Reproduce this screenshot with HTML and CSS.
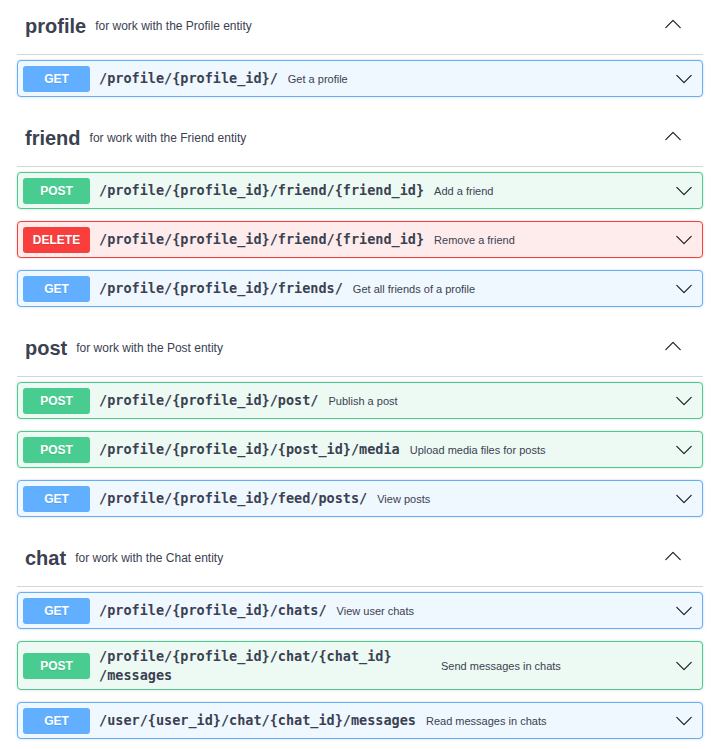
FILE: index.html
```html
<!DOCTYPE html>
<html lang="en">
<head>
<meta charset="utf-8">
<title>API</title>
<link rel="stylesheet" href="styles.css">
</head>
<body>
<div class="page">

  <section class="tag">
    <div class="tag-head">
      <h3 class="tag-title">profile</h3>
      <span class="tag-desc">for work with the Profile entity</span>
      <svg class="tag-arrow" viewBox="0 0 16 16"><polyline points="0.8,11.6 8,4.4 15.2,11.6"/></svg>
    </div>
    <div class="op op-get">
      <span class="method">GET</span>
      <span class="path">/profile/{profile_id}/</span>
      <span class="summary">Get a profile</span>
      <svg class="op-arrow" viewBox="0 0 16 16"><polyline points="0.8,4.4 8,11.6 15.2,4.4"/></svg>
    </div>
  </section>

  <section class="tag">
    <div class="tag-head">
      <h3 class="tag-title">friend</h3>
      <span class="tag-desc">for work with the Friend entity</span>
      <svg class="tag-arrow" viewBox="0 0 16 16"><polyline points="0.8,11.6 8,4.4 15.2,11.6"/></svg>
    </div>
    <div class="op op-post">
      <span class="method">POST</span>
      <span class="path">/profile/{profile_id}/friend/{friend_id}</span>
      <span class="summary">Add a friend</span>
      <svg class="op-arrow" viewBox="0 0 16 16"><polyline points="0.8,4.4 8,11.6 15.2,4.4"/></svg>
    </div>
    <div class="op op-delete">
      <span class="method">DELETE</span>
      <span class="path">/profile/{profile_id}/friend/{friend_id}</span>
      <span class="summary">Remove a friend</span>
      <svg class="op-arrow" viewBox="0 0 16 16"><polyline points="0.8,4.4 8,11.6 15.2,4.4"/></svg>
    </div>
    <div class="op op-get">
      <span class="method">GET</span>
      <span class="path">/profile/{profile_id}/friends/</span>
      <span class="summary">Get all friends of a profile</span>
      <svg class="op-arrow" viewBox="0 0 16 16"><polyline points="0.8,4.4 8,11.6 15.2,4.4"/></svg>
    </div>
  </section>

  <section class="tag">
    <div class="tag-head">
      <h3 class="tag-title">post</h3>
      <span class="tag-desc">for work with the Post entity</span>
      <svg class="tag-arrow" viewBox="0 0 16 16"><polyline points="0.8,11.6 8,4.4 15.2,11.6"/></svg>
    </div>
    <div class="op op-post">
      <span class="method">POST</span>
      <span class="path">/profile/{profile_id}/post/</span>
      <span class="summary">Publish a post</span>
      <svg class="op-arrow" viewBox="0 0 16 16"><polyline points="0.8,4.4 8,11.6 15.2,4.4"/></svg>
    </div>
    <div class="op op-post">
      <span class="method">POST</span>
      <span class="path">/profile/{profile_id}/{post_id}/media</span>
      <span class="summary">Upload media files for posts</span>
      <svg class="op-arrow" viewBox="0 0 16 16"><polyline points="0.8,4.4 8,11.6 15.2,4.4"/></svg>
    </div>
    <div class="op op-get">
      <span class="method">GET</span>
      <span class="path">/profile/{profile_id}/feed/posts/</span>
      <span class="summary">View posts</span>
      <svg class="op-arrow" viewBox="0 0 16 16"><polyline points="0.8,4.4 8,11.6 15.2,4.4"/></svg>
    </div>
  </section>

  <section class="tag">
    <div class="tag-head">
      <h3 class="tag-title">chat</h3>
      <span class="tag-desc">for work with the Chat entity</span>
      <svg class="tag-arrow" viewBox="0 0 16 16"><polyline points="0.8,11.6 8,4.4 15.2,11.6"/></svg>
    </div>
    <div class="op op-get">
      <span class="method">GET</span>
      <span class="path">/profile/{profile_id}/chats/</span>
      <span class="summary">View user chats</span>
      <svg class="op-arrow" viewBox="0 0 16 16"><polyline points="0.8,4.4 8,11.6 15.2,4.4"/></svg>
    </div>
    <div class="op op-post">
      <span class="method">POST</span>
      <span class="path">/profile/{profile_id}/chat/{chat_id}<wbr>/messages</span>
      <span class="summary">Send messages in chats</span>
      <svg class="op-arrow" viewBox="0 0 16 16"><polyline points="0.8,4.4 8,11.6 15.2,4.4"/></svg>
    </div>
    <div class="op op-get">
      <span class="method">GET</span>
      <span class="path">/user/{user_id}/chat/{chat_id}/messages</span>
      <span class="summary">Read messages in chats</span>
      <svg class="op-arrow" viewBox="0 0 16 16"><polyline points="0.8,4.4 8,11.6 15.2,4.4"/></svg>
    </div>
  </section>

</div>
</body>
</html>
```

FILE: styles.css
```css
html, body {
  margin: 0;
  padding: 0;
  background: #ffffff;
}

body {
  font-family: "Liberation Sans", Arial, sans-serif;
  color: #3b4151;
}

.page {
  margin-top: -3px;
  padding: 0 9px 0 17px;
}

.tag-head {
  display: flex;
  align-items: center;
  height: 57px;
  padding: 0 22px 0 8px;
  border-bottom: 1px solid #d3d5d9;
  margin-bottom: 5px;
}

.tag-title {
  margin: 0;
  font-size: 20px;
  font-weight: 700;
  color: #3b4151;
  line-height: 1;
}

.tag-desc {
  flex: 1;
  padding-left: 9px;
  font-size: 12px;
  color: #3b4151;
}

.tag-arrow {
  width: 16px;
  height: 16px;
  margin-bottom: 4px;
  fill: none;
  stroke: #1a1a1a;
  stroke-width: 1.15;
  stroke-linecap: round;
  stroke-linejoin: round;
}

.op {
  display: flex;
  align-items: center;
  padding: 4.5px 5px;
  margin-bottom: 12px;
  border: 1px solid;
  border-radius: 4px;
  box-shadow: 0 0 2.5px rgba(0, 0, 0, 0.19);
}

.op-get {
  border-color: #61affe;
  background: #eff7ff;
}

.op-post {
  border-color: #49cc90;
  background: #edfaf4;
}

.op-delete {
  border-color: #f93e3e;
  background: #feecec;
}

.method {
  flex-shrink: 0;
  width: 67px;
  height: 26px;
  display: flex;
  align-items: center;
  justify-content: center;
  border-radius: 3px;
  color: #ffffff;
  font-size: 12px;
  font-weight: 700;
  text-shadow: 0 1px 0 rgba(0, 0, 0, 0.1);
}

.op-get .method { background: #61affe; }
.op-post .method { background: #49cc90; }
.op-delete .method { background: #f93e3e; }

.path {
  flex-shrink: 0;
  max-width: 332px;
  padding: 0 10px 0 9px;
  font-family: "DejaVu Sans Mono", "Liberation Mono", monospace;
  font-size: 13.5px;
  font-weight: 700;
  line-height: 19px;
  color: #3b4151;
}

.summary {
  flex: 1;
  font-size: 11px;
  color: #3b4151;
}

.op-arrow {
  flex-shrink: 0;
  width: 16px;
  height: 16px;
  margin-right: 5px;
  fill: none;
  stroke: #1a1a1a;
  stroke-width: 1.15;
  stroke-linecap: round;
  stroke-linejoin: round;
}
```
